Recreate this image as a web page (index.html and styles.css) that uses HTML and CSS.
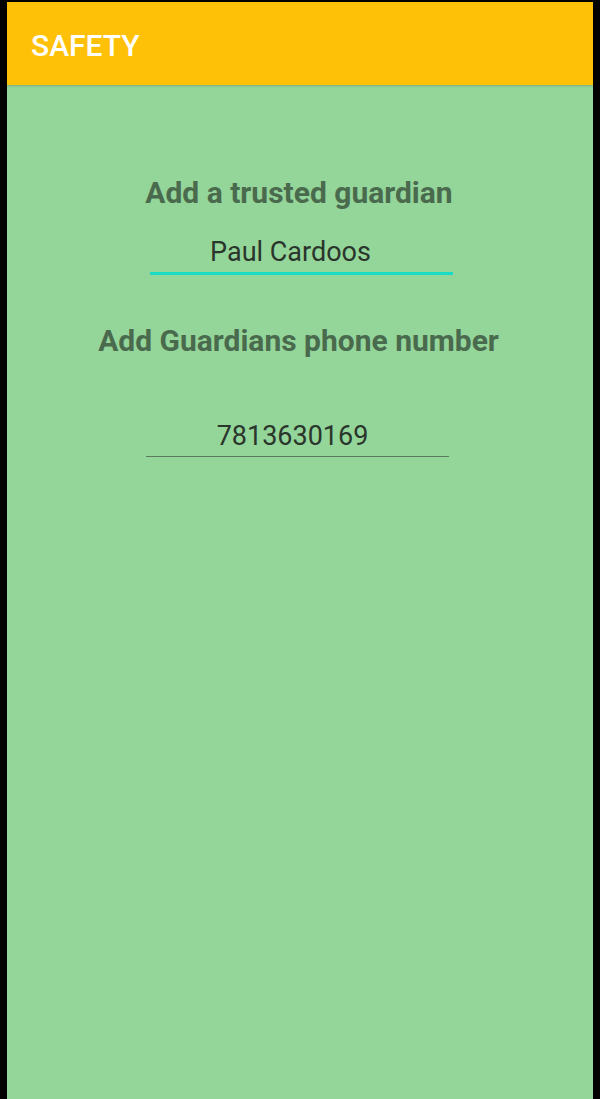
FILE: index.html
```html
<!DOCTYPE html>
<html>
<head>
<meta charset="utf-8">
<link rel="stylesheet" href="styles.css">
</head>
<body>
<div class="screen">
  <header class="appbar"><span class="title">SAFETY</span></header>
  <main class="content">
    <h2 class="label first">Add a trusted guardian</h2>
    <div class="field focused"><span class="value">Paul Cardoos</span></div>
    <h2 class="label second">Add Guardians phone number</h2>
    <div class="field phone"><span class="value">7813630169</span></div>
  </main>
</div>
</body>
</html>
```
FILE: styles.css
```css
html, body {
  margin: 0;
  padding: 0;
  background: #000;
  height: 100%;
}
.screen {
  margin: 2px 7px 0 7px;
  height: 1097px;
  background: #94d59a;
  display: flex;
  flex-direction: column;
  font-family: Roboto, "Noto Sans", sans-serif;
}
.appbar {
  height: 83px;
  background: #ffc107;
  display: flex;
  align-items: center;
  padding-left: 24px;
  box-shadow: 0 1px 2px rgba(0,0,0,0.2);
}
.title {
  color: #fff;
  font-size: 30px;
  font-weight: 500;
  margin-top: 3px;
}
.content {
  display: flex;
  flex-direction: column;
  align-items: center;
}
.label {
  margin: 0;
  font-size: 30px;
  font-weight: 700;
  color: #4a6a4d;
  line-height: 36px;
}
.label.first { margin-top: 90px; margin-left: -2px; }
.label.second { margin-top: 48px; margin-left: -3px; }
.field {
  width: 303px;
  display: flex;
  justify-content: center;
  font-size: 27px;
  color: #2a352b;
  line-height: 32px;
}
.field.focused {
  margin-top: 25px;
  margin-left: 3px;
  padding-right: 22px;
  box-sizing: border-box;
  border-bottom: 3px solid #19dcc6;
  padding-bottom: 4px;
}
.field.phone {
  margin-top: 61px;
  margin-left: -6px;
  padding-right: 9px;
  box-sizing: border-box;
  border-bottom: 1px solid #5c7a5f;
  padding-bottom: 4px;
}
```
